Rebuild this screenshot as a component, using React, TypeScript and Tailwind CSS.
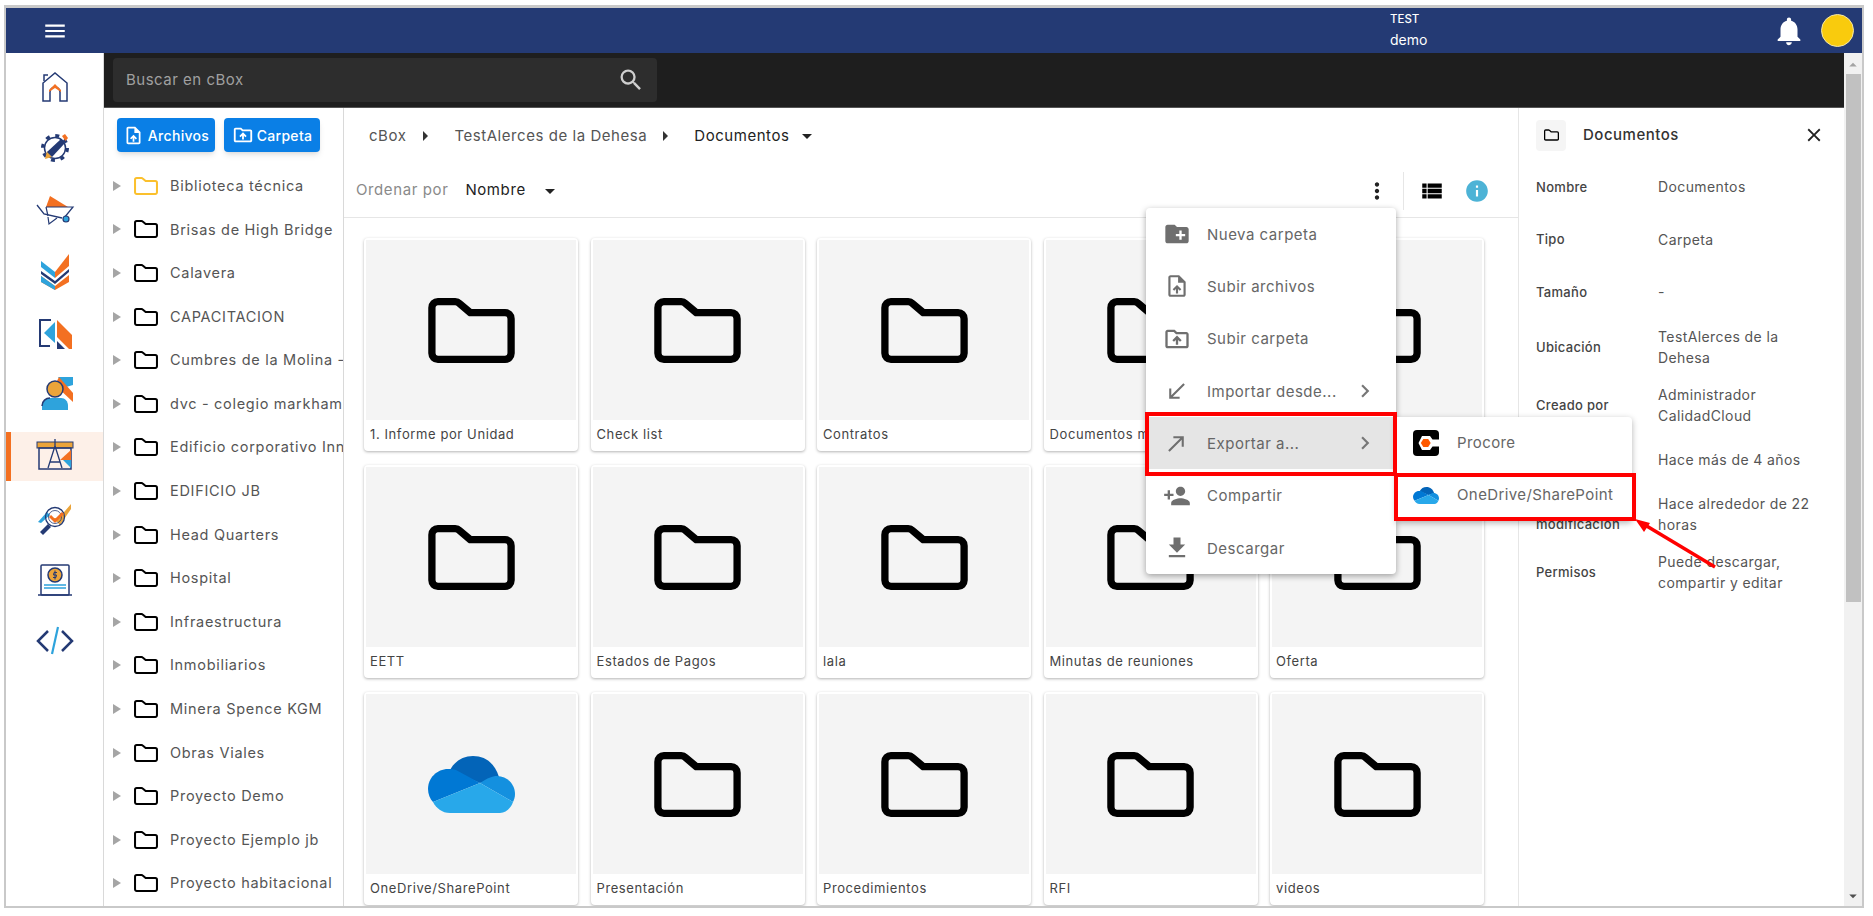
import {
  MdMenu, MdNotifications, MdSearch, MdOutlineUploadFile, MdOutlineDriveFolderUpload, MdArrowRight, MdArrowDropDown,
  MdMoreVert, MdViewList, MdInfo, MdClose, MdCreateNewFolder, MdSouthWest, MdNorthEast, MdPersonAdd, MdFileDownload,
  MdChevronRight, MdArrowDropUp,
} from "react-icons/md";

const treeItems = [
  "Biblioteca técnica", "Brisas de High Bridge", "Calavera", "CAPACITACION", "Cumbres de la Molina - Etapa", "dvc - colegio markham",
  "Edificio corporativo Innova", "EDIFICIO JB", "Head Quarters", "Hospital", "Infraestructura", "Inmobiliarios",
  "Minera Spence KGM", "Obras Viales", "Proyecto Demo", "Proyecto Ejemplo jb", "Proyecto habitacional",
];

const cards = [
  "1. Informe por Unidad", "Check list", "Contratos", "Documentos maestros", "Correos",
  "EETT", "Estados de Pagos", "lala", "Minutas de reuniones", "Oferta",
  "OneDrive/SharePoint", "Presentación", "Procedimientos", "RFI", "videos",
];

const details = [
  { label: "Nombre", value: "Documentos", h: "h-[52px]" },
  { label: "Tipo", value: "Carpeta", h: "h-[53px]" },
  { label: "Tamaño", value: "-", h: "h-[52px]" },
  { label: "Ubicación", value: "TestAlerces de la Dehesa", h: "h-[58px]" },
  { label: "Creado por", value: "Administrador CalidadCloud", h: "h-[58px]" },
  { label: "Creado", value: "Hace más de 4 años", h: "h-[52px]" },
  { label: "Última modificación", value: "Hace alrededor de 22 horas", h: "h-[56px]" },
  { label: "Permisos", value: "Puede descargar, compartir y editar", h: "h-[60px]" },
];

const FolderIcon = ({ className }: { className: string }) => (
  <svg viewBox="0 0 86.5 65" className={className} fill="none" stroke="currentColor" strokeWidth="7.3" strokeLinejoin="round">
    <path d="M3.65 9.65a6 6 0 0 1 6-6H27a6 6 0 0 1 4.2 1.8L42 14.65H76.85a6 6 0 0 1 6 6V55.35a6 6 0 0 1-6 6H9.65a6 6 0 0 1-6-6Z" />
  </svg>
);

const OneDriveIcon = ({ className }: { className: string }) => (
  <svg viewBox="0 0 87 57" className={className}>
    <path fill="#0364b8" d="M22 14C27 5 35 0 45 0C58 0 67 8 71 21L52 27Z" />
    <path fill="#0078d4" d="M20 13C9 13 0 22 0 33C0 38 2 43 5 46L52 27L28 14C26 13 23 13 20 13Z" />
    <path fill="#1490df" d="M52 27L85 46C86 44 87 41 87 38C87 28 79 20 69 20C64 20 60 22 52 27Z" />
    <path fill="#28a8ea" d="M52 27L5 46C8 52 14 57 22 57H72C78 57 83 52 85 46Z" />
  </svg>
);

const ProcoreIcon = () => (
  <svg viewBox="0 0 26 26" className="w-[26px] h-[26px]">
    <rect width="26" height="26" rx="4" fill="#000" />
    <path fill="#fff" d="M5.5 13L9 6H17L19.5 9.5H26V16.5H19.5L17 20H9Z" />
    <path fill="#ff5a00" d="M10.3 9H15.2L17.7 13L15.2 17H10.3L7.8 13Z" />
  </svg>
);

const navy = "#243a74";
const orange = "#f37021";
const sky = "#2ea3dc";

// menu icons of the left rail, 40x40 box each
const railIcons = [
  <>
    <path d="M8 34V16L20 6L32 16V34H25V25a5 5 0 0 0-10 0V34Z" fill="none" stroke={navy} strokeWidth="1.5" />
    <path d="M9 14V8H13" fill="none" stroke={navy} strokeWidth="1.5" />
    <path d="M14 23L20 17L26 23V25L20 21L14 25Z" fill={orange} />
  </>,
  <>
    <circle cx="20" cy="20" r="10.5" fill="#fff" stroke={navy} strokeWidth="1.5" />
    <circle cx="20" cy="20" r="12.5" fill="none" stroke={navy} strokeWidth="3" strokeDasharray="4 5.8" />
    <path d="M10 31L12 23L17 29Z" fill="#eba43a" />
    <path d="M12 24L26 11L30 15L17 29Z" fill={navy} />
    <path d="M27 8L30 6L33 10L30.5 13Z" fill={orange} />
  </>,
  <>
    <path d="M2 15L9 24L27 28" fill="none" stroke={navy} strokeWidth="1.3" />
    <path d="M11 17L15 6L33 17Z" fill={orange} />
    <path d="M11 17H38L29 28M11 17L13 26" fill="none" stroke={navy} strokeWidth="1.2" />
    <path d="M13 27L14 34L22 28" fill="none" stroke={navy} strokeWidth="1.2" />
    <circle cx="31" cy="29" r="3" fill={sky} stroke={navy} strokeWidth="1.2" />
  </>,
  <>
    <path d="M20 20L34 2V14L20 26Z" fill={orange} />
    <path d="M6 9L20 20V26L6 15Z" fill={sky} />
    <path d="M6 19L20 29L34 17V20L20 32L6 22Z" fill={navy} />
    <path d="M6 24L20 34L34 23V30L20 38L6 30Z" fill={orange} />
    <path d="M6 24L20 34V38L6 30Z" fill={sky} />
  </>,
  <>
    <path d="M16 7H5V33H15" fill="none" stroke={navy} strokeWidth="2" />
    <path d="M9 20L20 9V30Z" fill={sky} />
    <path d="M22 7L37 22V36H34L22 24Z" fill={orange} />
    <path d="M22 28L30 36H22Z" fill={navy} />
  </>,
  <>
    <path d="M23 2H38V10L31 12Z" fill={sky} />
    <path d="M24 2L38 18V27L20 10Z" fill={orange} />
    <circle cx="20" cy="14" r="8" fill="#eba43a" stroke={navy} strokeWidth="1.5" />
    <path d="M7 35V31C7 26 11 23 15 23H26C30 23 33 26 33 31V35Z" fill={sky} stroke={navy} strokeWidth="0" />
    <path d="M7 31C7 26 11 23 15 23" fill="none" stroke={navy} strokeWidth="1.5" />
  </>,
  <>
    <rect x="2" y="6" width="36" height="6" fill="#eba43a" stroke={navy} strokeWidth="1" />
    <rect x="4" y="12" width="32" height="21" fill="none" stroke={navy} strokeWidth="1.5" />
    <path d="M25 24L36 14V24Z" fill={orange} />
    <path d="M28 24H36V32Z" fill={sky} />
    <path d="M20 3V10M20 10L13 32M20 10L27 32M15 26H25" fill="none" stroke={navy} strokeWidth="1.3" />
  </>,
  <>
    <path d="M24 20L36 6V11L25 27L18 20Z" fill="#eba43a" />
    <path d="M3 24L12 14L15 17L6 25Z" fill={sky} />
    <circle cx="20" cy="19" r="9.5" fill="none" stroke={navy} strokeWidth="1.3" />
    <circle cx="20" cy="19" r="6.5" fill="none" stroke={navy} strokeWidth="0.8" />
    <path d="M15 18L20 23L28 15" fill="none" stroke={orange} strokeWidth="3" />
    <path d="M13 26L5 34L8 37L16 29Z" fill={navy} />
  </>,
  <>
    <rect x="6" y="5" width="28" height="30" rx="1" fill="none" stroke={navy} strokeWidth="1.5" />
    <circle cx="20" cy="15" r="7" fill="#eba43a" stroke={navy} strokeWidth="1.5" />
    <path d="M22 12.5H19L18.5 15H21.5L21 17.5H18M20 10.5V19.5" fill="none" stroke={navy} strokeWidth="1" />
    <path d="M9 25H31M9 28H31" stroke={sky} strokeWidth="1.4" />
    <path d="M3 35H37" stroke={navy} strokeWidth="1.5" />
  </>,
  <>
    <path d="M13 10L3 20L13 30" fill="none" stroke={navy} strokeWidth="2.5" />
    <path d="M27 10L37 20L27 30" fill="none" stroke={navy} strokeWidth="2.5" />
    <path d="M23 6L17 33" fill="none" stroke={sky} strokeWidth="2.2" />
  </>,
];

const menuItems = [
  { label: "Nueva carpeta", icon: <MdCreateNewFolder size={28} /> },
  { label: "Subir archivos", icon: <MdOutlineUploadFile size={26} /> },
  { label: "Subir carpeta", icon: <MdOutlineDriveFolderUpload size={28} /> },
  { label: "Importar desde...", icon: <MdSouthWest size={25} />, more: true },
  { label: "Exportar a...", icon: <MdNorthEast size={25} />, more: true, active: true },
  { label: "Compartir", icon: <MdPersonAdd size={28} /> },
  { label: "Descargar", icon: <MdFileDownload size={28} /> },
];

export default function App() {
  return (
    <div className="relative w-[1873px] h-[916px] bg-white overflow-hidden pt-[5px] pl-[4px] font-[Inter,sans-serif]">
      <div className="flex flex-col w-[1860px] h-[903px] border-2 border-t-[3px] border-[#c9c9c9]">
        <header className="flex items-center h-[45px] shrink-0 bg-[#243a74] text-white">
          <div className="flex justify-center w-[98px]">
            <MdMenu size={26} />
          </div>
          <div className="ml-[1286px] w-[100px] leading-none">
            <p className="text-[11.5px] font-medium">TEST</p>
            <p className="mt-[7px] text-[14px]">demo</p>
          </div>
          <MdNotifications size={34} className="ml-[282px]" />
          <div className="ml-[15px] w-[33px] h-[33px] rounded-full bg-[#f9cb0d] border border-[#f5e7a8]" />
        </header>

        <div className="flex flex-1 min-h-0">
          <aside className="w-[98px] shrink-0 border-r border-[#d9d9d9] pt-[3px]">
            {railIcons.map((icon, i) => (
              <div key={i} className="flex items-center h-[61.6px]">
                <div className={`relative flex items-center justify-center w-full h-[49px] ${i === 6 ? "bg-[#fdf0e8]" : ""}`}>
                  {i === 6 && <div className="absolute left-0 top-0 bottom-0 w-[5px] bg-[#f37021]" />}
                  <svg viewBox="0 0 40 40" className="w-[40px] h-[40px]">{icon}</svg>
                </div>
              </div>
            ))}
          </aside>

          <div className="flex flex-col flex-1 min-w-0">
            <div className="flex items-center h-[55px] shrink-0 bg-[#1e1e1e] border-b border-[#555] pl-[9px]">
              <div className="flex items-center justify-between w-[544px] h-[44px] bg-[#2d2d2d] rounded-sm pl-[13px] pr-[12px]">
                <span className="text-[15px] tracking-[0.5px] text-[#a0a0a0]">Buscar en cBox</span>
                <MdSearch size={28} className="text-[#cfcfcf]" />
              </div>
            </div>

            <div className="flex flex-1 min-h-0">
              <div className="w-[240px] shrink-0 border-r border-[#d9d9d9] overflow-hidden">
                <div className="flex gap-[9px] pl-[13px] pt-[10px]">
                  <button className="flex items-center justify-center gap-[4px] w-[98px] h-[34px] rounded bg-[#0a7fe6] text-white text-[14px] font-medium shadow-md tracking-[0.3px]">
                    <MdOutlineUploadFile size={21} />
                    Archivos
                  </button>
                  <button className="flex items-center justify-center gap-[3px] w-[96px] h-[34px] rounded bg-[#0a7fe6] text-white text-[14px] font-medium shadow-md tracking-[0.3px]">
                    <MdOutlineDriveFolderUpload size={22} />
                    Carpeta
                  </button>
                </div>
                <ul className="pt-[12px]">
                  {treeItems.map((name, i) => (
                    <li key={name} className="flex items-center h-[43.6px] pl-[9px] whitespace-nowrap">
                      <svg viewBox="0 0 8 10" className="w-[8px] h-[10px] shrink-0">
                        <path d="M0 0L8 5L0 10Z" fill="#a5a5a5" />
                      </svg>
                      <FolderIcon className={`ml-[13px] w-[24px] h-[18px] shrink-0 ${i === 0 ? "text-[#fbc02d]" : "text-black"}`} />
                      <span className="ml-[12px] text-[14.5px] tracking-[0.7px] text-[#555]">{name}</span>
                    </li>
                  ))}
                </ul>
              </div>

              <main className="flex flex-col w-[1175px] shrink-0 border-r border-[#e6e6e6] min-h-0 overflow-hidden">
                <div className="flex items-center h-[56px] shrink-0 pl-[25px] text-[15px] tracking-[0.55px] whitespace-nowrap">
                  <span className="text-[#555]">cBox</span>
                  <MdArrowRight size={24} className="ml-[7px] text-[#333]" />
                  <span className="ml-[17px] text-[#555]">TestAlerces de la Dehesa</span>
                  <MdArrowRight size={24} className="ml-[6px] text-[#333]" />
                  <span className="ml-[17px] text-[#222]">Documentos</span>
                  <MdArrowDropDown size={24} className="ml-[6px] text-[#222]" />
                </div>
                <div className="flex items-center h-[54px] shrink-0 pl-[12px] pr-[28px] border-b border-[#e6e6e6] text-[15px] tracking-[0.6px]">
                  <span className="text-[#8a8a8a]">Ordenar por</span>
                  <span className="ml-[17px] text-[#222]">Nombre</span>
                  <MdArrowDropDown size={24} className="ml-[12px] text-[#222]" />
                  <MdMoreVert size={26} className="ml-auto text-[#222]" />
                  <div className="ml-[13px] w-px h-[38px] bg-[#e6e6e6]" />
                  <MdViewList size={26} className="ml-[15px] text-black" />
                  <MdInfo size={26} className="ml-[19px] text-[#4db3d6]" />
                </div>
                <div className="grid grid-cols-[repeat(5,214px)] gap-x-[12.5px] gap-y-[14px] pl-[20px] pt-[20px]">
                  {cards.map((name) => (
                    <div key={name} className="h-[213px] rounded bg-white p-[2px] pb-0 shadow-[0_1px_3px_rgba(0,0,0,0.3)]">
                      <div className="flex items-center justify-center h-[180px] bg-[#f4f4f4]">
                        {name === "OneDrive/SharePoint" ? <OneDriveIcon className="w-[87px] h-[57px]" /> : <FolderIcon className="w-[87px] h-[65px] text-black" />}
                      </div>
                      <p className="pl-[4px] pt-[5px] text-[13px] tracking-[0.6px] text-[#444]">{name}</p>
                    </div>
                  ))}
                </div>
              </main>

              <section className="flex-1 min-w-0 pl-[17px] pr-[16px]">
                <div className="flex items-center h-[53px] pt-[1px]">
                  <div className="flex items-center justify-center w-[30px] h-[31px] rounded-sm bg-[#f5f5f5]">
                    <FolderIcon className="w-[15px] h-[12px] text-black" />
                  </div>
                  <span className="ml-[17px] text-[15px] font-medium tracking-[0.5px] text-[#333]">Documentos</span>
                  <MdClose size={22} className="ml-auto mr-[3px] text-[#222]" />
                </div>
                {details.map((d) => (
                  <div key={d.label} className={`flex items-center ${d.h}`}>
                    <span className="w-[122px] shrink-0 pr-[20px] text-[13px] font-medium tracking-[0.3px] leading-[21px] text-[#444]">{d.label}</span>
                    <span className="pr-[14px] text-[14px] tracking-[0.4px] leading-[21.5px] text-[#555]">{d.value}</span>
                  </div>
                ))}
              </section>
            </div>
          </div>

          <div className="flex flex-col items-center w-[18px] shrink-0 bg-[#f1f1f1]">
            <MdArrowDropUp size={18} className="mt-[3px] text-[#a3a3a3]" />
            <div className="w-[15px] h-[528px] bg-[#c1c1c1]" />
            <MdArrowDropDown size={18} className="mt-auto mb-[1px] text-[#505050]" />
          </div>
        </div>
      </div>

      {/* context menu */}
      <div className="absolute left-[1146px] top-[208px] w-[250px] rounded bg-white shadow-[0_2px_6px_rgba(0,0,0,0.35)]">
        {menuItems.map((item) => (
          <div key={item.label} className={`flex items-center h-[52.3px] text-[#666] ${item.active ? "bg-[#e5e5e5]" : ""}`}>
            <div className="flex justify-center w-[61px] text-[#6f6f6f]">{item.icon}</div>
            <span className="pt-[2px] text-[15px] tracking-[0.5px]">{item.label}</span>
            {item.more && <MdChevronRight size={26} className="ml-auto mr-[18px] text-[#777]" />}
          </div>
        ))}
      </div>

      {/* export submenu */}
      <div className="absolute left-[1396px] top-[417px] w-[236px] rounded-r bg-white shadow-[0_2px_6px_rgba(0,0,0,0.3)]">
        <div className="flex items-center h-[52px] pl-[17px] text-[15px] tracking-[0.4px] text-[#666]">
          <ProcoreIcon />
          <span className="ml-[18px]">Procore</span>
        </div>
        <div className="flex items-center h-[52px] pl-[17px] text-[15px] tracking-[0.4px] text-[#666]">
          <OneDriveIcon className="w-[26px] h-[17px]" />
          <span className="ml-[18px]">OneDrive/SharePoint</span>
        </div>
      </div>

      {/* red callouts on top of the screenshot */}
      <div className="absolute left-[1145px] top-[412px] w-[252px] h-[64px] border-[4px] border-[#ff0000]" />
      <div className="absolute left-[1394px] top-[473px] w-[242px] h-[48px] border-[4px] border-[#ff0000]" />
      <svg className="absolute left-[1625px] top-[505px] w-[100px] h-[75px]" viewBox="0 0 100 75">
        <path d="M90 62L20 20" stroke="#ff0000" strokeWidth="3.5" fill="none" />
        <path d="M10 14L25 18L19 27Z" fill="#ff0000" />
      </svg>
    </div>
  );
}
